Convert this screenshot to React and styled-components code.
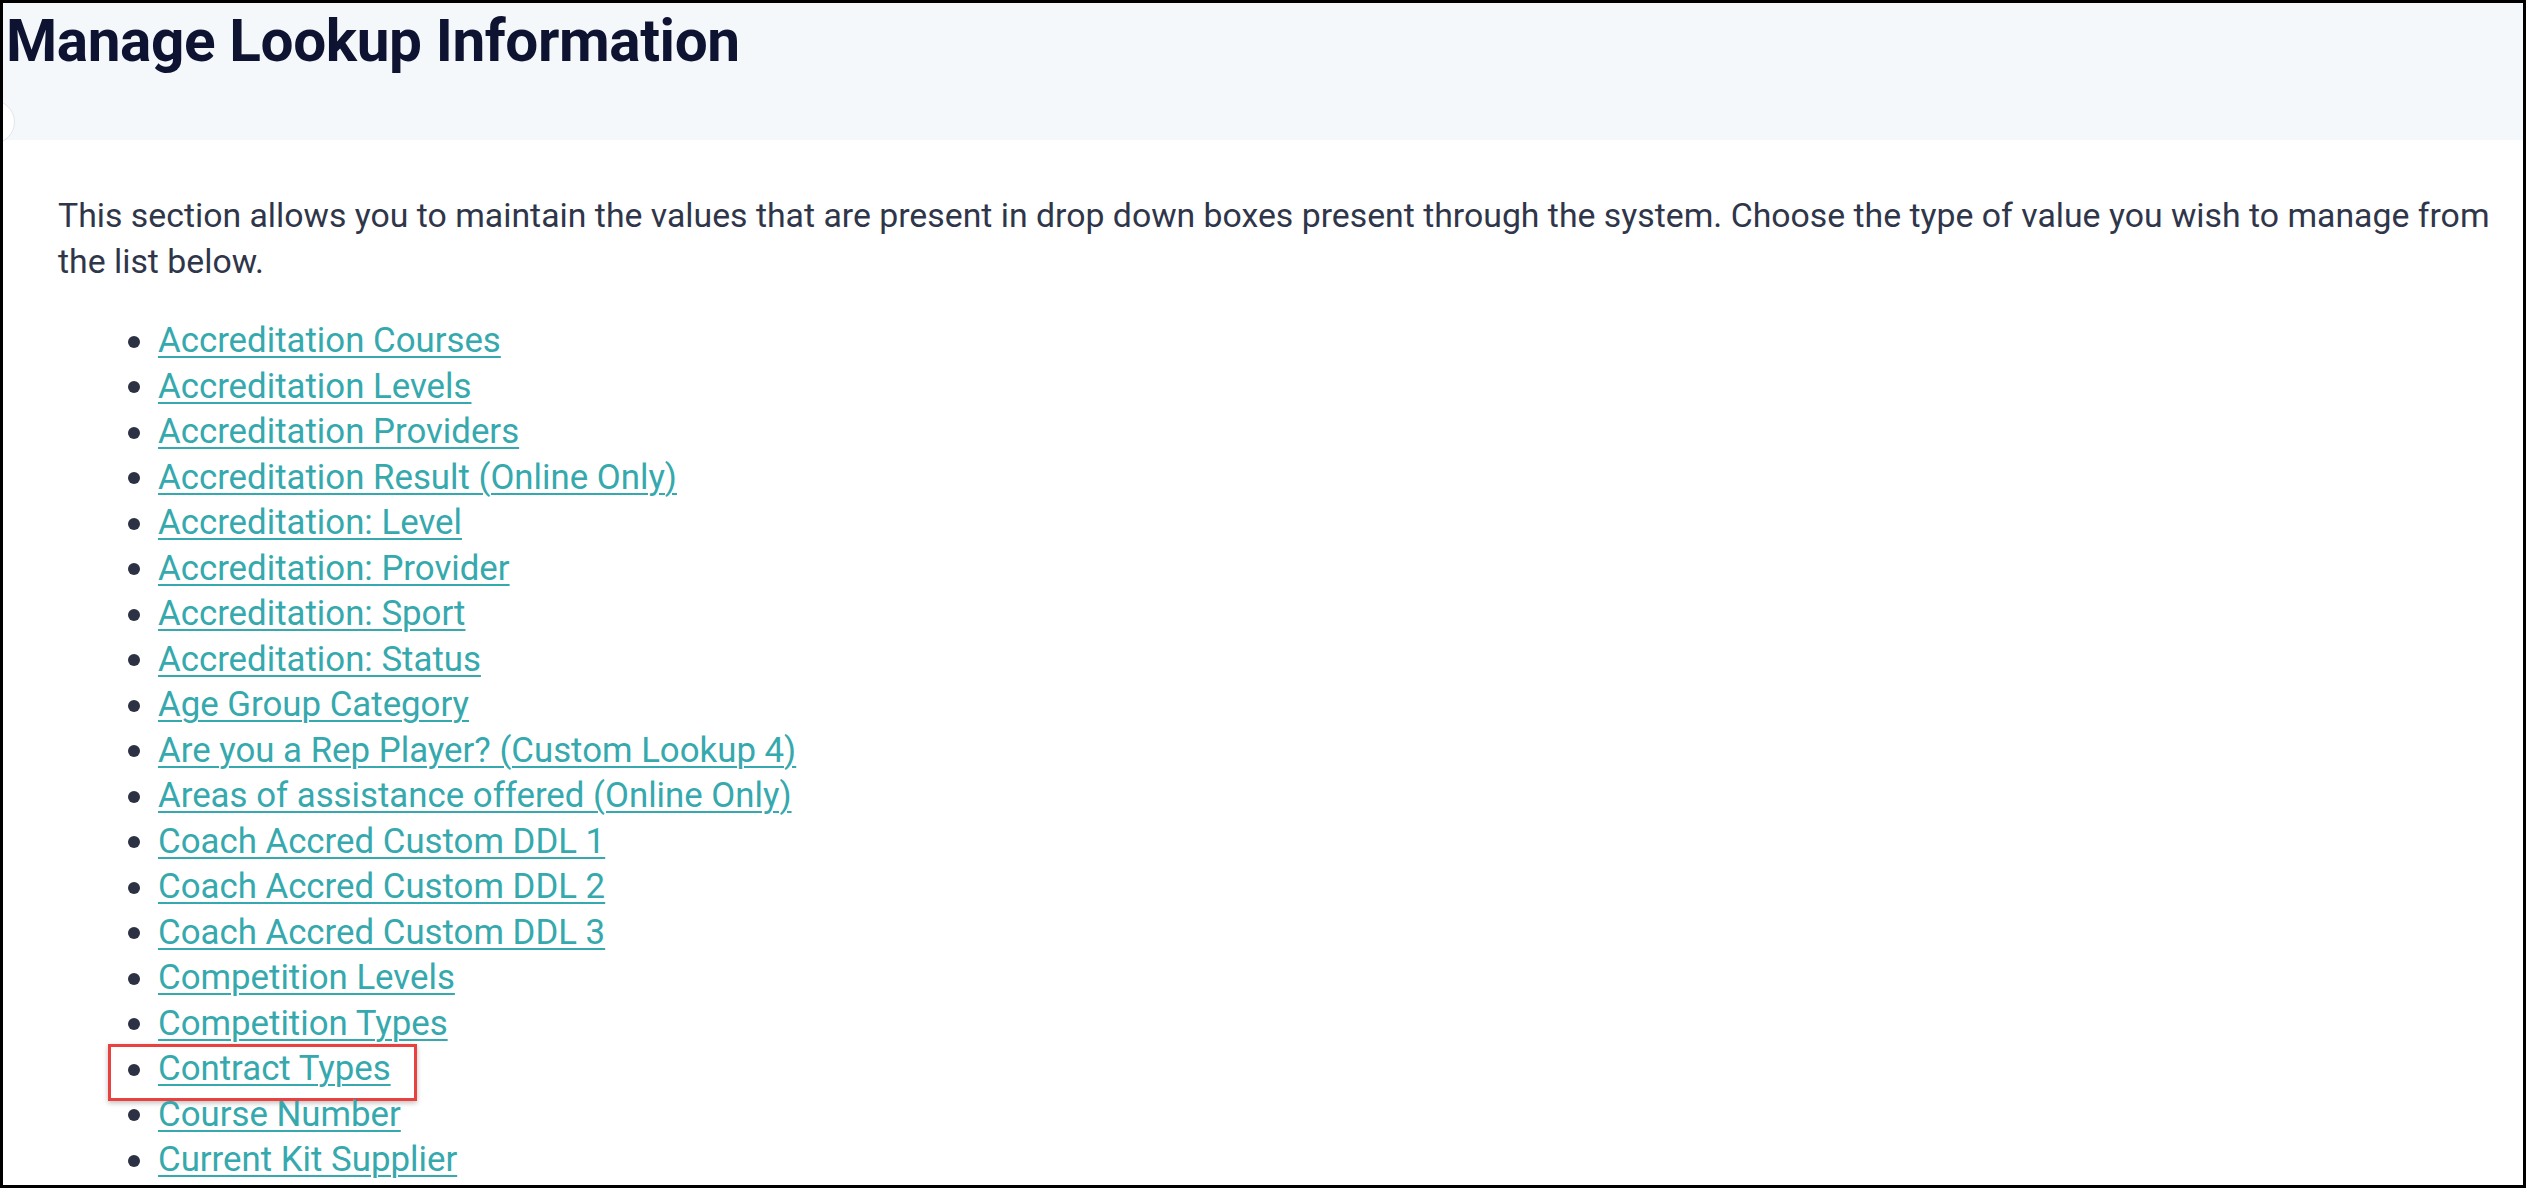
import React from "react"
import styled, { createGlobalStyle } from "styled-components"

const lookups = [
  "Accreditation Courses",
  "Accreditation Levels",
  "Accreditation Providers",
  "Accreditation Result (Online Only)",
  "Accreditation: Level",
  "Accreditation: Provider",
  "Accreditation: Sport",
  "Accreditation: Status",
  "Age Group Category",
  "Are you a Rep Player? (Custom Lookup 4)",
  "Areas of assistance offered (Online Only)",
  "Coach Accred Custom DDL 1",
  "Coach Accred Custom DDL 2",
  "Coach Accred Custom DDL 3",
  "Competition Levels",
  "Competition Types",
  "Contract Types",
  "Course Number",
  "Current Kit Supplier",
]

const GlobalStyle = createGlobalStyle`
  html, body {
    margin: 0;
    padding: 0;
    background: #fff;
  }
  body {
    font-family: Roboto, "Liberation Sans", sans-serif;
  }
`

// page layout
const App = () => {
  return (
    <>
      <GlobalStyle />
      <Frame>
        <Header>
          <Title>Manage Lookup Information</Title>
        </Header>
        <Toggle />
        <Content>
          <Intro>
            This section allows you to maintain the values that are present in drop down boxes present
            through the system. Choose the type of value you wish to manage from the list below.
          </Intro>
          <List>
            {lookups.map((item, index) => (
              <Item key={index}>
                <LinkWrap>
                  <ItemLink href="#">{item}</ItemLink>
                  {item === "Contract Types" && <Highlight />}
                </LinkWrap>
              </Item>
            ))}
          </List>
        </Content>
      </Frame>
    </>
  )
}

export default App

const Frame = styled.div`
  position: relative;
  width: 2526px;
  height: 1188px;
  box-sizing: border-box;
  border: 3px solid #000;
  overflow: hidden;
  background: #fff;
`

const Header = styled.header`
  height: 137px;
  background: #f5f8fb;
  padding: 3px 0 0 3px;
  box-sizing: border-box;
`

const Title = styled.h1`
  margin: 0;
  font-family: Roboto, "Liberation Sans", sans-serif;
  font-weight: 700;
  font-size: 58.5px;
  line-height: 70px;
  letter-spacing: -0.4px;
  color: #0f1332;
`

const Toggle = styled.div`
  position: absolute;
  left: -32px;
  top: 97px;
  width: 42px;
  height: 42px;
  border-radius: 50%;
  border: 1px solid #e2e5ea;
  background: #fff;
`

const Content = styled.main`
  padding: 53px 4px 0 55px;
`

const Intro = styled.p`
  margin: 0;
  font-size: 33.8px;
  line-height: 46px;
  color: #30364a;
`

const List = styled.ul`
  list-style: none;
  margin: 33px 0 0;
  padding: 0 0 0 70px;
`

const Item = styled.li`
  display: flex;
  align-items: center;
  gap: 18px;
  height: 45.5px;

  &::before {
    content: "";
    width: 12px;
    height: 12px;
    border-radius: 50%;
    background: #2c3144;
    flex-shrink: 0;
    transform: translateY(1px);
  }
`

const LinkWrap = styled.span`
  position: relative;
  display: block;
  font-size: 34.8px;
  line-height: 45.5px;
  height: 45.5px;
`

const ItemLink = styled.a`
  color: #35a9ad;
  text-decoration: underline;
  text-decoration-thickness: 2px;
  text-underline-offset: 4px;
`

const Highlight = styled.span`
  position: absolute;
  left: -50px;
  right: -26px;
  top: -2px;
  bottom: -9.5px;
  border: 3px solid #e8413f;
  box-shadow: 0 2px 5px rgba(0, 0, 0, 0.25);
  pointer-events: none;
`
